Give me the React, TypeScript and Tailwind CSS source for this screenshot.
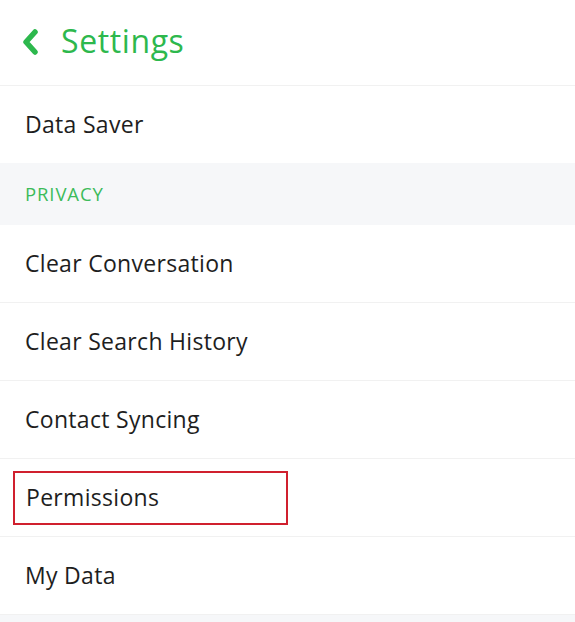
import React from 'react';

const FONT = { fontFamily: '"Open Sans", "Liberation Sans", sans-serif' };

const PRIVACY_ITEMS = ['Clear Conversation', 'Clear Search History', 'Contact Syncing', 'Permissions', 'My Data'];

function Row({ label, highlighted }: { label: string; highlighted?: boolean }) {
  return (
    <div className="h-[78px] border-b border-[#f1f1f1] flex items-center px-[13px]">
      <div
        className={
          highlighted
            ? 'w-[275px] h-[54px] flex items-center px-[11px] border-2 border-[#d0202e]'
            : 'flex items-center px-[12px]'
        }
      >
        <span className="text-[23px] text-[#1e1e1e] tracking-[0.3px]">{label}</span>
      </div>
    </div>
  );
}

export default function App() {
  return (
    <div className="w-[575px] h-[622px] bg-white overflow-hidden" style={FONT}>
      {/* Header */}
      <div className="h-[86px] border-b border-[#f1f1f1] flex items-center pl-[22px] gap-[23px]">
        <svg width="16" height="26" viewBox="0 0 16 26" className="mt-[-1px]">
          <path d="M13 3 L4 13 L13 23" fill="none" stroke="#2db84d" strokeWidth="5.5" strokeLinecap="round" strokeLinejoin="round" />
        </svg>
        <span className="text-[32px] text-[#2db84d] tracking-[0.6px] mt-[-4px]">Settings</span>
      </div>

      <Row label="Data Saver" />

      {/* Section header */}
      <div className="h-[62px] bg-[#f6f7f9] flex items-center px-[25px] mt-[-1px]">
        <span className="text-[18.5px] text-[#3cbb5a] tracking-[0.9px]">PRIVACY</span>
      </div>

      {PRIVACY_ITEMS.map((item) => (
        <Row key={item} label={item} highlighted={item === 'Permissions'} />
      ))}

      <div className="h-[10px] bg-[#f6f7f9]" />
    </div>
  );
}
